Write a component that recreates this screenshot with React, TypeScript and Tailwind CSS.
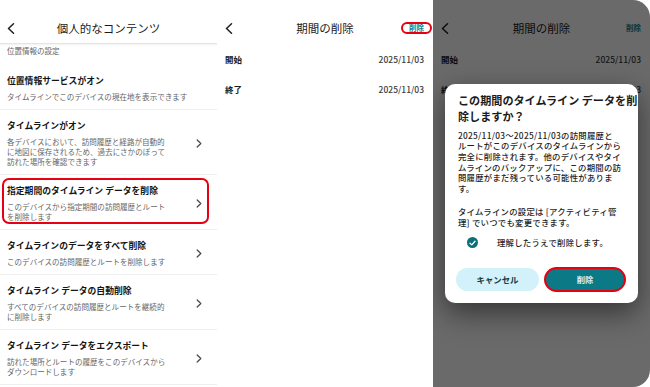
import React from "react";

const BackIcon = () => (
  <svg width="8" height="11" viewBox="0 0 8 11" fill="none">
    <polyline points="6.5,0.8 1.5,5.5 6.5,10.2" stroke="#1f1f1f" strokeWidth="1.5" strokeLinecap="round" strokeLinejoin="round" />
  </svg>
);

const Chevron = () => (
  <svg width="6" height="9" viewBox="0 0 6 9" fill="none">
    <polyline points="1.2,1 4.8,4.5 1.2,8" stroke="#4a4a4a" strokeWidth="1.3" strokeLinecap="round" strokeLinejoin="round" />
  </svg>
);

type Item = { title: string; sub: string[]; chevron: boolean; highlight?: boolean };

const items: Item[] = [
  { title: "位置情報サービスがオン", sub: ["タイムラインでこのデバイスの現在地を表示できます"], chevron: false },
  {
    title: "タイムラインがオン",
    sub: ["各デバイスにおいて、訪問履歴と経路が自動的", "に地図に保存されるため、過去にさかのぼって", "訪れた場所を確認できます"],
    chevron: true,
  },
  {
    title: "指定期間のタイムライン データを削除",
    sub: ["このデバイスから指定期間の訪問履歴とルート", "を削除します"],
    chevron: true,
    highlight: true,
  },
  { title: "タイムラインのデータをすべて削除", sub: ["このデバイスの訪問履歴とルートを削除します"], chevron: true },
  {
    title: "タイムライン データの自動削除",
    sub: ["すべてのデバイスの訪問履歴とルートを継続的", "に削除します"],
    chevron: true,
  },
  {
    title: "タイムライン データをエクスポート",
    sub: ["訪れた場所とルートの履歴をこのデバイスから", "ダウンロードします"],
    chevron: true,
  },
];

function PanelOne() {
  return (
    <div className="w-[217px] shrink-0 bg-white">
      <div className="h-[44px] pt-[16px] flex items-start border-b border-[#e4e4e4] shadow-[0_1px_2px_rgba(0,0,0,0.06)]">
        <div className="relative w-full h-[24px] flex items-center justify-center">
          <div className="absolute left-[7px] top-[7px]">
            <BackIcon />
          </div>
          <span className="text-[11.5px] leading-[24px] text-[#1a1a1a]">個人的なコンテンツ</span>
        </div>
      </div>
      <div className="pt-[2px] pl-[7px] text-[7.5px] leading-[10px] text-[#666]">位置情報の設定</div>
      <div className="mt-[9px]">
        {items.map((it, i) => (
          <div key={i} className="relative flex items-center border-b border-[#efefef] pl-[7px] pr-[15px] pt-[10px] pb-[7px]">
            <div className="flex-1">
              <div className="text-[8.8px] leading-[12px] font-bold text-[#141414] whitespace-nowrap">{it.title}</div>
              <div className="mt-[5px]">
                {it.sub.map((s, j) => (
                  <div key={j} className="text-[7.55px] leading-[10px] text-[#666] whitespace-nowrap">
                    {s}
                  </div>
                ))}
              </div>
            </div>
            {it.chevron && (
              <div className="w-[6px] flex items-center">
                <Chevron />
              </div>
            )}
            {it.highlight && (
              <div className="absolute left-[2px] top-[3px] bottom-[5px] w-[207px] border-2 border-[#e60012] rounded-[7px]" />
            )}
          </div>
        ))}
      </div>
    </div>
  );
}

function PeriodContent({ outlined }: { outlined: boolean }) {
  return (
    <>
      <div className="h-[44px] pt-[16px]">
        <div className="relative h-[24px] flex items-center justify-center">
          <div className="absolute left-[8px] top-[7px]">
            <BackIcon />
          </div>
          <span className="text-[11.5px] leading-[24px] text-[#1a1a1a]">期間の削除</span>
          <div
            className={
              "absolute right-[1px] top-[6px] w-[31px] h-[12px] rounded-full border-2 flex items-center justify-center " +
              (outlined ? "border-[#e60012]" : "border-transparent")
            }
          >
            <span className="text-[7.5px] leading-[8px] font-bold text-[#0b7f8c]">削除</span>
          </div>
        </div>
      </div>
      <div className="h-[30px] flex items-center justify-between pl-[8px] pr-[9px]">
        <span className="text-[8.5px] font-bold text-[#1d1d1d]">開始</span>
        <span className="text-[8.5px] font-medium text-[#3a3a3a]">2025/11/03</span>
      </div>
      <div className="h-[30px] flex items-center justify-between pl-[8px] pr-[9px]">
        <span className="text-[8.5px] font-bold text-[#1d1d1d]">終了</span>
        <span className="text-[8.5px] font-medium text-[#3a3a3a]">2025/11/03</span>
      </div>
    </>
  );
}

function PanelTwo() {
  return (
    <div className="w-[216px] shrink-0 bg-white">
      <PeriodContent outlined />
    </div>
  );
}

const bodyLines = [
  "2025/11/03～2025/11/03の訪問履歴と",
  "ルートがこのデバイスのタイムラインから",
  "完全に削除されます。他のデバイスやタイ",
  "ムラインのバックアップに、この期間の訪",
  "問履歴がまだ残っている可能性がありま",
  "す。",
];

function PanelThree() {
  return (
    <div className="relative w-[217px] h-[387px] shrink-0 bg-white rounded-r-[17px] overflow-hidden">
      <PeriodContent outlined={false} />
      <div className="absolute inset-0 bg-black/[0.585]" />
      <div className="absolute left-[12px] top-[84px] w-[193px] h-[219px] bg-white rounded-[10px] shadow-[0_10px_28px_rgba(0,0,0,0.5)] pl-[13px] pr-[4px] pt-[8px]">
        <div className="text-[11.1px] leading-[16px] font-bold text-[#1b1b1b] whitespace-nowrap">
          <div>この期間のタイムライン データを削</div>
          <div>除しますか？</div>
        </div>
        <div className="mt-[5.5px] text-[8.4px] leading-[10.7px] tracking-[0.25px] font-medium text-[#1f1f1f] whitespace-nowrap">
          {bodyLines.map((l, i) => (
            <div key={i}>{l}</div>
          ))}
        </div>
        <div className="mt-[12.5px] text-[8.4px] leading-[10.7px] tracking-[0.25px] font-medium text-[#1f1f1f] whitespace-nowrap">
          <div>タイムラインの設定は [アクティビティ管</div>
          <div>理] でいつでも変更できます。</div>
        </div>
        <div className="mt-[8px] h-[14px] flex items-center">
          <div className="ml-[9px] w-[11px] h-[11px] rounded-full bg-[#0d6f7b] flex items-center justify-center">
            <svg width="7" height="6" viewBox="0 0 7 6" fill="none">
              <polyline points="1,3.2 2.8,4.9 6,1.2" stroke="#fff" strokeWidth="1.3" strokeLinecap="round" strokeLinejoin="round" />
            </svg>
          </div>
          <span className="ml-[19px] text-[8.4px] tracking-[0.25px] font-medium text-[#1f1f1f]">理解したうえで削除します。</span>
        </div>
        <div className="mt-[17px] -ml-[2px] flex items-center gap-[5px]">
          <div className="w-[83px] h-[23px] rounded-full bg-[#d3f1fb] flex items-center justify-center">
            <span className="text-[8.4px] font-bold text-[#0f3d48]">キャンセル</span>
          </div>
          <div className="w-[82px] h-[25px] rounded-full border-2 border-[#e60012] bg-[#0b7986] flex items-center justify-center">
            <span className="text-[8.4px] font-bold text-[#d8eef1]">削除</span>
          </div>
        </div>
      </div>
    </div>
  );
}

export default function App() {
  return (
    <div className="w-[650px] h-[387px] flex bg-white overflow-hidden font-['Noto_Sans_CJK_JP',sans-serif]">
      <PanelOne />
      <PanelTwo />
      <PanelThree />
    </div>
  );
}
